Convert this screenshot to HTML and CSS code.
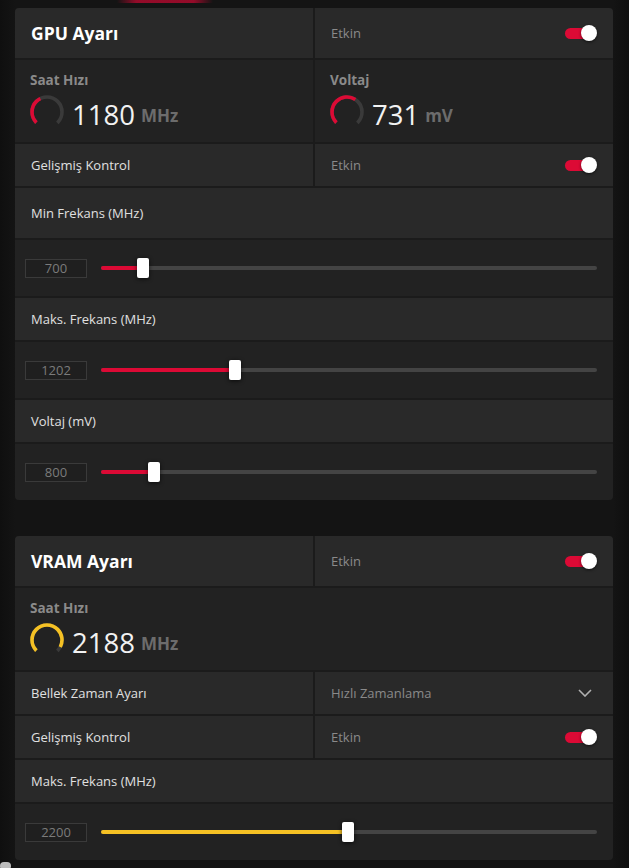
FILE: index.html
```html
<!DOCTYPE html>
<html lang="tr">
<head>
<meta charset="utf-8">
<title>GPU Ayarı</title>
<link rel="stylesheet" href="styles.css">
</head>
<body>
<div class="page">
  <div class="glow"></div>

  <section class="panel">
    <div class="row split">
      <div class="cell head"><h2 class="title">GPU Ayarı</h2></div>
      <div class="cell head cell-right"><span class="muted">Etkin</span><span class="toggle"><span class="knob"></span></span></div>
    </div>
    <div class="row split">
      <div class="stat">
        <div class="stat-label">Saat Hızı</div>
        <div class="stat-body">
          <svg class="gauge" viewBox="0 0 34 34"><circle cx="17" cy="17" r="15" class="g-track" transform="rotate(135 17 17)"/><circle cx="17" cy="17" r="15" class="g-red" stroke-dasharray="28.3 94.25" transform="rotate(135 17 17)"/></svg>
          <div class="stat-value"><span class="num">1180</span><span class="unit">MHz</span></div>
        </div>
      </div>
      <div class="stat">
        <div class="stat-label">Voltaj</div>
        <div class="stat-body">
          <svg class="gauge" viewBox="0 0 34 34"><circle cx="17" cy="17" r="15" class="g-track" transform="rotate(135 17 17)"/><circle cx="17" cy="17" r="15" class="g-red" stroke-dasharray="43.8 94.25" transform="rotate(135 17 17)"/></svg>
          <div class="stat-value"><span class="num">731</span><span class="unit">mV</span></div>
        </div>
      </div>
    </div>
    <div class="row split">
      <div class="cell line"><span class="label">Gelişmiş Kontrol</span></div>
      <div class="cell line cell-right"><span class="muted">Etkin</span><span class="toggle"><span class="knob"></span></span></div>
    </div>
    <div class="row">
      <div class="cell line tall"><span class="label">Min Frekans (MHz)</span></div>
    </div>
    <div class="row">
      <div class="slider-row">
        <div class="num-box">700</div>
        <div class="track"><div class="fill red" style="width:42px"></div><div class="thumb" style="left:42px"></div></div>
      </div>
    </div>
    <div class="row">
      <div class="cell line"><span class="label">Maks. Frekans (MHz)</span></div>
    </div>
    <div class="row">
      <div class="slider-row">
        <div class="num-box">1202</div>
        <div class="track"><div class="fill red" style="width:134px"></div><div class="thumb" style="left:134px"></div></div>
      </div>
    </div>
    <div class="row">
      <div class="cell line"><span class="label">Voltaj (mV)</span></div>
    </div>
    <div class="row">
      <div class="slider-row">
        <div class="num-box">800</div>
        <div class="track"><div class="fill red" style="width:53px"></div><div class="thumb" style="left:53px"></div></div>
      </div>
    </div>
  </section>

  <section class="panel">
    <div class="row split">
      <div class="cell head"><h2 class="title">VRAM Ayarı</h2></div>
      <div class="cell head cell-right"><span class="muted">Etkin</span><span class="toggle"><span class="knob"></span></span></div>
    </div>
    <div class="row">
      <div class="stat">
        <div class="stat-label">Saat Hızı</div>
        <div class="stat-body">
          <svg class="gauge" viewBox="0 0 34 34"><circle cx="17" cy="17" r="15" class="g-track" transform="rotate(135 17 17)"/><circle cx="17" cy="17" r="15" class="g-yellow" stroke-dasharray="65.7 94.25" transform="rotate(135 17 17)"/></svg>
          <div class="stat-value"><span class="num">2188</span><span class="unit">MHz</span></div>
        </div>
      </div>
    </div>
    <div class="row split">
      <div class="cell line"><span class="label">Bellek Zaman Ayarı</span></div>
      <div class="cell line cell-right"><span class="muted">Hızlı Zamanlama</span><svg class="chev" viewBox="0 0 14 8"><polyline points="1,1 7,7 13,1"/></svg></div>
    </div>
    <div class="row split">
      <div class="cell line"><span class="label">Gelişmiş Kontrol</span></div>
      <div class="cell line cell-right"><span class="muted">Etkin</span><span class="toggle"><span class="knob"></span></span></div>
    </div>
    <div class="row">
      <div class="cell line"><span class="label">Maks. Frekans (MHz)</span></div>
    </div>
    <div class="row">
      <div class="slider-row">
        <div class="num-box">2200</div>
        <div class="track"><div class="fill yellow" style="width:247px"></div><div class="thumb" style="left:247px"></div></div>
      </div>
    </div>
  </section>

  <div class="pill"></div>
</div>
</body>
</html>
```

FILE: styles.css
```css
* { box-sizing: border-box; }
html, body { margin: 0; padding: 0; }
body {
  background: #131313;
  font-family: "Open Sans", "Noto Sans", sans-serif;
  color: #dcdcdc;
  width: 629px;
  height: 868px;
  overflow: hidden;
}
.page {
  position: relative;
  height: 868px;
  padding: 8px 16px 0 15px;
  display: flex;
  flex-direction: column;
  gap: 36px;
  background: linear-gradient(to right, #0f0f0f 0, #141414 15px, #141414 613px, #0e0e0e 629px);
}
.glow {
  position: absolute;
  left: 117px;
  top: 0;
  width: 96px;
  height: 3px;
  background: linear-gradient(to right, rgba(150,10,40,0), rgba(170,10,45,0.85) 20%, rgba(170,10,45,0.85) 80%, rgba(150,10,40,0));
}
.pill {
  position: absolute;
  left: 0;
  top: 862px;
  width: 11px;
  height: 8px;
  border-radius: 4px;
  background: #bdbdbd;
}
.panel {
  width: 598px;
  display: flex;
  flex-direction: column;
  gap: 2px;
  background: #1b1b1b;
  border-radius: 4px;
  overflow: hidden;
}
.row { display: grid; gap: 2px; }
.split { grid-template-columns: 1fr 1fr; }
.cell {
  display: flex;
  align-items: center;
  padding: 0 16px;
  background: #292929;
}
.head { height: 50px; }
.line { height: 42px; }
.tall { height: 50px; }
.cell-right { justify-content: space-between; }
.title {
  margin: 0;
  font-size: 17.5px;
  font-weight: 700;
  color: #ffffff;
}
.label { font-size: 13px; color: #e0e0e0; }
.muted { font-size: 13px; color: #8a8a8a; }
.toggle {
  position: relative;
  width: 32px;
  height: 16px;
  flex: none;
}
.toggle::before {
  content: "";
  position: absolute;
  left: 0;
  top: 2.5px;
  width: 28px;
  height: 11px;
  border-radius: 6px;
  background: #dc0a35;
}
.knob {
  position: absolute;
  right: 0;
  top: 0;
  width: 16px;
  height: 16px;
  border-radius: 50%;
  background: #ffffff;
  box-shadow: 0 1px 3px rgba(0,0,0,0.6);
}
.chev { width: 14px; height: 8px; margin-right: 5px; fill: none; stroke: #b0b0b0; stroke-width: 1.6; }
.stat {
  height: 82px;
  padding: 10px 16px 0 15px;
  background: #222222;
}
.stat-label {
  font-size: 13.5px;
  font-weight: 700;
  line-height: 20px;
  color: #8a8a8a;
}
.stat-body {
  display: flex;
  align-items: center;
  margin-top: 5px;
  height: 34px;
}
.gauge { width: 34px; height: 34px; flex: none; }
.gauge circle { fill: none; stroke-width: 3.6; }
.g-track { stroke: #3a3a3a; stroke-dasharray: 70.69 94.25; }
.g-red { stroke: #dc0a35; }
.g-yellow { stroke: #f5c124; }
.stat-value {
  display: flex;
  align-items: center;
  gap: 6px;
  margin-left: 8px;
  margin-top: 5px;
}
.num { font-size: 27.5px; line-height: 34px; color: #f2f2f2; }
.unit { font-size: 17px; font-weight: 700; line-height: 20px; color: #6c6c6c; margin-top: 2px; }
.slider-row {
  height: 56px;
  display: flex;
  align-items: center;
  padding: 0 16px 0 10px;
  background: #222222;
}
.num-box {
  width: 62px;
  height: 19px;
  flex: none;
  border: 1px solid #3a3a3a;
  background: #1f1f1f;
  color: #7b7b7b;
  font-size: 13px;
  line-height: 17px;
  text-align: center;
}
.track {
  position: relative;
  flex: 1;
  margin-left: 14px;
  height: 4px;
  border-radius: 2px;
  background: #444444;
}
.fill { height: 100%; border-radius: 2px; }
.red { background: #dc0a35; }
.yellow { background: #f5c124; }
.thumb {
  position: absolute;
  top: 50%;
  width: 12px;
  height: 20px;
  margin: -10px 0 0 -6px;
  border-radius: 2px;
  background: #ffffff;
  box-shadow: 0 1px 4px rgba(0,0,0,0.7);
}
```
